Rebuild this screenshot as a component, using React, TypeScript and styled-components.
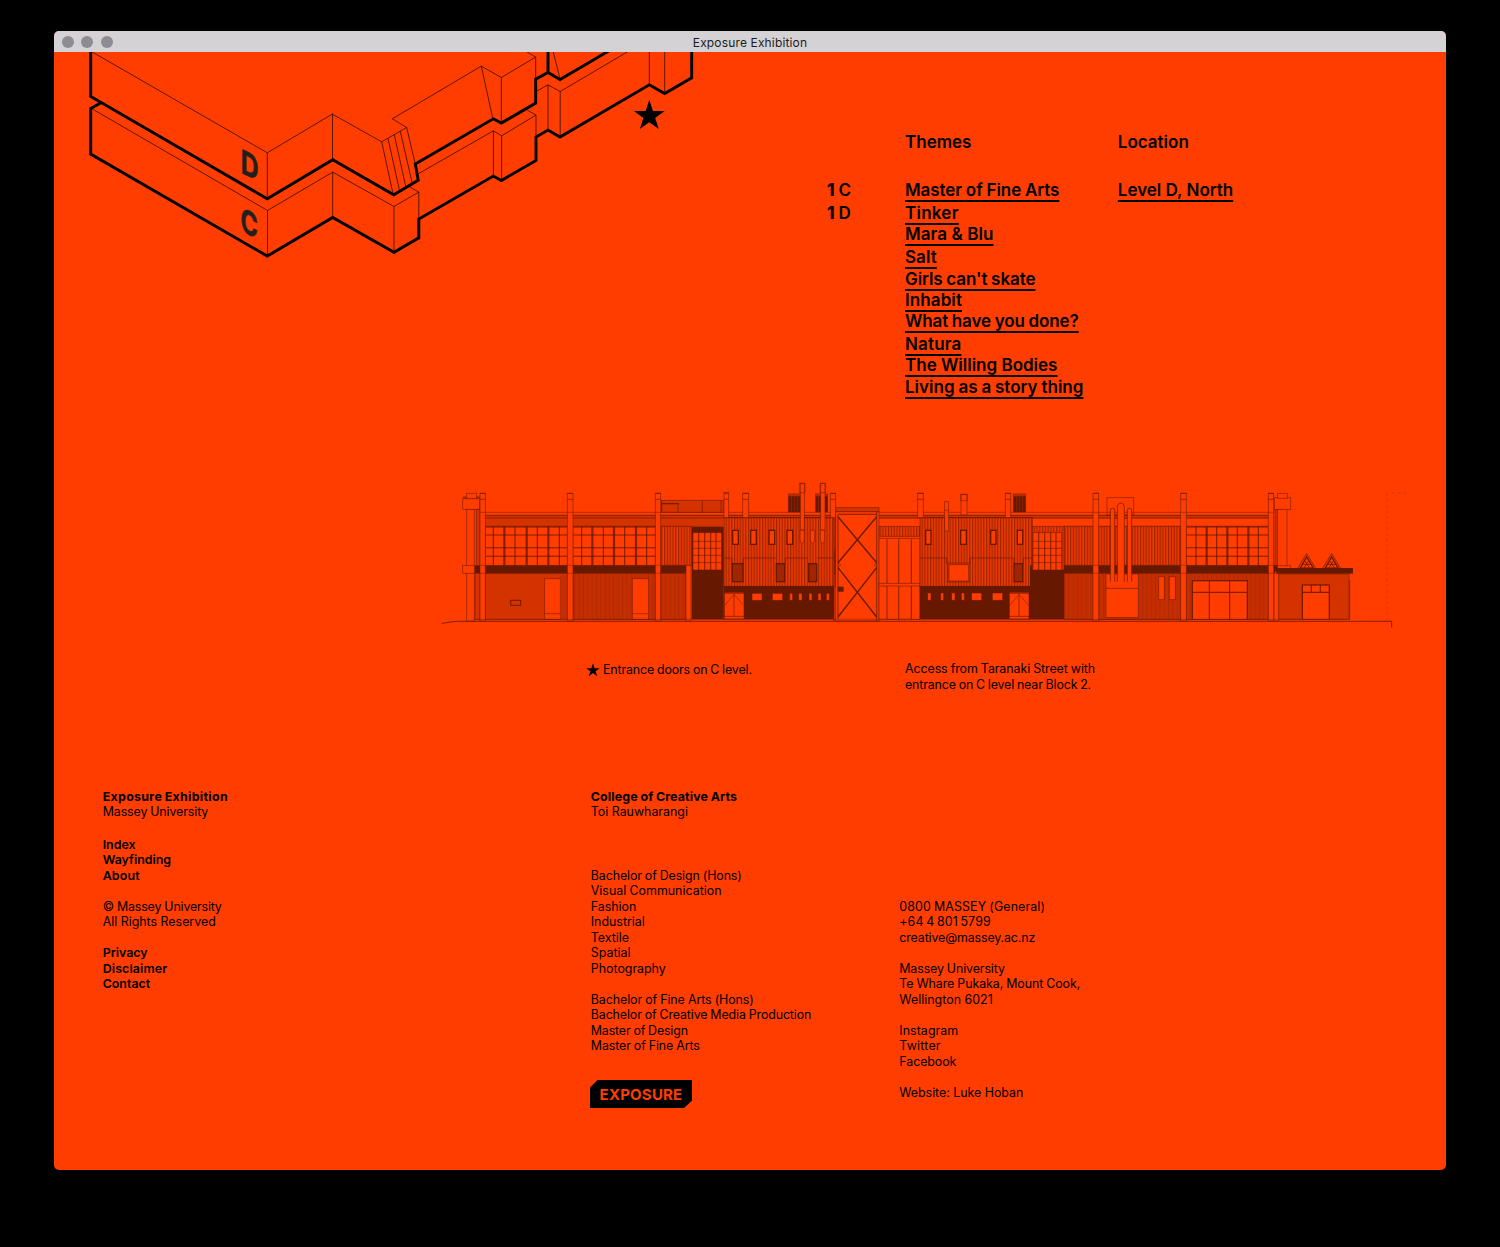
import React from 'react';
import styled, { createGlobalStyle } from 'styled-components';

const ORANGE = '#ff3d00';
const DARK = '#661800';
const MID = '#d43300';
const DEEP = '#c42e00';
const SANS = 'Inter, "Liberation Sans", sans-serif';

const GlobalStyle = createGlobalStyle`
  html, body { margin: 0; background: #000; }
  body { font-family: ${SANS}; color: #000; }
  *, *::before, *::after { box-sizing: border-box; }
`;

const Desktop = styled.div`
  width: 1500px;
  height: 1247px;
  padding: 31px 54px 0;
  background: #000;
  overflow: hidden;
`;

const Window = styled.div`
  width: 1392px;
  height: 1139px;
  border-radius: 5px;
  overflow: hidden;
  background: ${ORANGE};
  display: flex;
  flex-direction: column;
`;

const TitleBar = styled.header`
  flex: none;
  display: grid;
  grid-template-columns: 1fr auto 1fr;
  align-items: center;
  height: 21px;
  padding: 0 8px;
  background: #d4d2d4;
`;

const Lights = styled.div`
  display: flex;
  gap: 7.3px;
`;

const Light = styled.span`
  width: 12px;
  height: 12px;
  border-radius: 50%;
  background: #8e8c93;
`;

const WindowTitle = styled.span`
  padding-top: 1.5px;
  font-size: 12px;
  letter-spacing: 0.15px;
  line-height: 19px;
  color: #1c1c1c;
`;

const Page = styled.main`
  flex: 1;
`;

const Hero = styled.section`
  display: flex;
  height: 423px;

  > svg { flex: none; display: block; }
`;

const Listing = styled.div`
  display: grid;
  grid-template-columns: 78px 212.8px auto;
  grid-template-rows: 21.4px auto;
  row-gap: 26.2px;
  align-content: start;
  padding: 80.2px 0 0 73px;
  font-size: 17px;
  font-weight: 600;
  line-height: 21.4px;
  white-space: nowrap;
`;

const Heading = styled.h2<{ $column: number }>`
  grid-column: ${(p) => p.$column};
  margin: 0;
  font: inherit;
`;

const List = styled.ul<{ $column: number }>`
  grid-column: ${(p) => p.$column};
  grid-row: 2;
  list-style: none;
  margin: 0;
  padding: 0;
`;

const Item = styled.li<{ $step: number }>`
  height: ${(p) => p.$step}px;
`;

const ThemeLink = styled.a<{ $track?: number; $word?: number }>`
  letter-spacing: ${(p) => p.$track ?? 0}px;
  word-spacing: ${(p) => p.$word ?? 0}px;
  text-decoration: underline;
  text-decoration-thickness: 2px;
  text-decoration-skip-ink: none;
  text-underline-offset: 4px;
`;

const Block = styled.b`
  display: inline-block;
  width: 11.5px;
  font-weight: 800;
`;

const Elevation = styled.figure`
  margin: 0;
  padding-left: 386px;
  height: 186px;

  > svg { display: block; }
`;

const Captions = styled.section`
  display: grid;
  grid-template-columns: 319px auto;
  padding-left: 532px;
  height: 127.5px;
`;

const StarCaption = styled.div`
  display: flex;
  align-items: flex-start;
  gap: 3px;
  padding-top: 1px;

  > svg { margin-top: 0.6px; }
`;

const Copy = styled.p<{ $gap?: number }>`
  margin: 0;
  padding-top: ${(p) => p.$gap ?? 0}px;
`;

const Line = styled.span<{ $track?: number; $word?: number; $weight?: number }>`
  display: block;
  height: 15.5px;
  font-size: 12.4px;
  line-height: 15.5px;
  white-space: nowrap;
  font-weight: ${(p) => p.$weight ?? 400};
  letter-spacing: ${(p) => p.$track ?? 0}px;
  word-spacing: ${(p) => p.$word ?? 0}px;
`;

const Footer = styled.footer`
  display: grid;
  grid-template-columns: 488.1px 308.5px auto;
  padding-left: 48.7px;
`;

const Badge = styled.div`
  display: flex;
  align-items: center;
  justify-content: center;
  width: 102.5px;
  height: 28.5px;
  margin: 26px 0 0 -1px;
  background: #000;
  color: ${ORANGE};
  font-size: 15px;
  font-weight: 700;
  letter-spacing: 0.2px;
  clip-path: polygon(8px 0, 100% 0, 100% 20.5px, calc(100% - 8.5px) 100%, 0 100%, 0 8px);
`;

type Entry = { t: string; track?: number; word?: number; weight?: number };

const Lines = ({ items, gap }: { items: Entry[]; gap?: number }) => (
  <Copy $gap={gap}>
    {items.map((e) => (
      <Line key={e.t} $track={e.track} $word={e.word} $weight={e.weight}>
        {e.t}
      </Line>
    ))}
  </Copy>
);

const starPoints = (cx: number, cy: number, r: number) =>
  Array.from({ length: 10 }, (_, i) => {
    const a = -Math.PI / 2 + (i * Math.PI) / 5;
    const q = i % 2 ? r * 0.382 : r;
    return `${(cx + q * Math.cos(a)).toFixed(2)},${(cy + q * Math.sin(a)).toFixed(2)}`;
  }).join(' ');

const BuildingPlan = () => (
  <svg width="700" height="220" viewBox="54 52.2 700 220" fill="none" stroke="#000">
    <g strokeWidth="0.8" strokeOpacity="0.8">
      <path d="M91 51.5 267.3 153 332.3 114.3 381.7 142 406.7 127.7 392.3 119 481.3 66.3 501.3 77.7 535.7 57.3 526 51.5" />
      <path d="M267.3 153V198M332.5 114.3V160M501.3 77.7V122.5M535.7 57.3V80M481.3 66.3 492.7 118.3" />
      <path d="M381.7 142 392.9 193.5M388 138.7 399.3 189.8M394.3 135 405.6 186.2M400.3 131.5 412 182.5M406.7 127.7 415.3 164.3" />
      <path d="M553.2 52 560 79" />
      <path d="M92 109 267.5 210.7 332.7 172.3 394 206.7 418.8 192.3 409.5 187" />
      <path d="M267.5 210.7V256M332.7 172.3V217M394 206.7V252M418.8 192.3V220" />
      <path d="M418.3 174 493.4 131 501.6 136 536 115.3 527.3 110.3M493.4 131V176M501.6 136V180M536 115.3V138" />
      <path d="M536.7 91.3 548 85 560.2 91.7 627.5 52M548 85V130M560.2 91.7V137M649.3 52V85M664.7 52V93" />
    </g>
    <g strokeWidth="2.9">
      <path d="M90.7 51V96.7L267.3 199 332.7 160 393.7 195 418.2 180.5 415.3 164.3 493.3 119 501.3 123.3 535.7 103.3V79.3L548 72.7 560 79.7 609 51" />
      <path d="M548 51V72.7" />
      <path d="M101 103 90.7 108.7V154.3L267.3 256.3 332.7 217.7 394 252.5 418.8 238V219.3L493.3 176.3 501.3 180.7 536 160.7V137.3L548 130.3 560 137.3 649.3 85 664.7 93.7 691.7 78V51" />
    </g>
    <g fill="#231f20" stroke="#231f20" strokeWidth="0.6" fontFamily={SANS} fontWeight="700" fontSize="33">
      <text transform="matrix(.75 .36 0 1 240.8 173)">D</text>
      <text transform="matrix(.71 .34 0 1 240.6 231)">C</text>
    </g>
    <polygon points={starPoints(649.3, 116.2, 16.2)} fill="#000" stroke="none" />
  </svg>
);

type Rect = [number, number, number, number];

const Rects = ({ list, fill = ORANGE, outline = true, heavy = false }: { list: Rect[]; fill?: string; outline?: boolean; heavy?: boolean }) => (
  <g fill={fill} stroke={outline ? DARK : 'none'} strokeOpacity={heavy ? 1 : 0.6} strokeWidth={heavy ? 4 : 2.6}>
    {list.map(([x1, y1, x2, y2], i) => (
      <rect key={i} x={x1} y={y1} width={x2 - x1} height={y2 - y1} />
    ))}
  </g>
);

const Rules = ({ d, width = 2.4, opacity = 0.6 }: { d: string; width?: number; opacity?: number }) => (
  <path d={d} fill="none" stroke={DARK} strokeWidth={width} strokeOpacity={opacity} />
);

/* A glazed bay: outer frame, four transoms, alternating slim and thick mullions. */
const GlazedBay = ({ x1, x2, slim, thick }: { x1: number; x2: number; slim: number[]; thick: number[] }) => (
  <g>
    <Rects list={[[x1, 154, x2, 271]]} />
    <Rules d={[156, 180, 218, 244].map((y) => `M${x1} ${y}H${x2}`).join('')} width={3.2} opacity={0.85} />
    <Rules d={slim.map((x) => `M${x} 154V271`).join('')} width={3.2} opacity={0.85} />
    <Rules d={thick.map((x) => `M${x} 154V271`).join('')} width={6.5} opacity={0.8} />
  </g>
);

const GridWindow = ({ x }: { x: number }) => (
  <g>
    <Rects list={[[x, 173, x + 86, 285]]} />
    <Rules d={[17, 35, 53, 69].map((o) => `M${x + o} 173V285`).join('')} width={3.2} opacity={0.8} />
    <Rules d={[199, 220, 241, 263].map((y) => `M${x} ${y}H${x + 86}`).join('')} width={2.4} opacity={0.7} />
  </g>
);

const EntryDoor = ({ x }: { x: number }) => (
  <g>
    <Rects list={[[x, 352, x + 59, 432]]} />
    <Rules d={`M${x} 355H${x + 59}M${x + 29} 358V425M${x} 424H${x + 59}`} width={3} />
    <Rules d={`M${x + 2} 390 ${x + 29} 358 ${x + 57} 390`} width={2.4} />
  </g>
);

const Gable = ({ x }: { x: number }) => (
  <g>
    <path d={`M${x - 27} 279 ${x} 235 ${x + 27} 279`} fill={MID} stroke={DARK} strokeOpacity=".6" strokeWidth="2.4" />
    <path d={`M${x - 19} 279 ${x} 246 ${x + 19} 279Z`} fill={ORANGE} stroke={DARK} strokeWidth="3.5" />
    <Rules d={`M${x - 5} 258 ${x + 8} 279M${x + 5} 258 ${x - 8} 279M${x - 12} 268H${x + 12}`} width={2.6} opacity={0.9} />
  </g>
);

const columns: Rect[] = [
  [120, 55, 136, 438], [382, 55, 399, 438], [646, 55, 662, 438],
  [1959, 55, 1976, 438], [2222, 55, 2239, 438], [2485, 55, 2501, 438],
];
const stubs: Rect[] = [
  [852, 52, 866, 128], [908, 55, 926, 128], [1171, 55, 1187, 128], [1433, 55, 1450, 128], [1696, 55, 1712, 128],
];

const NorthElevation = () => (
  <svg width="980" height="160" viewBox="0 0 2940 480">
    <defs>
      <pattern id="sheet" width="8.4" height="10" patternUnits="userSpaceOnUse">
        <rect width="8.4" height="10" fill="#ef3900" />
        <rect width="3.6" height="10" fill="#a02500" />
      </pattern>
      <pattern id="cladding" width="13" height="10" patternUnits="userSpaceOnUse">
        <rect width="13" height="10" fill={DEEP} />
        <rect width="3" height="10" fill="#b32a00" />
      </pattern>
      <pattern id="louvre" width="9" height="10" patternUnits="userSpaceOnUse">
        <rect width="9" height="10" fill={DARK} />
        <rect width="3" height="10" fill="#852000" />
      </pattern>
    </defs>

    {/* roof plant */}
    <Rects list={[[665, 76, 850, 112]]} fill={MID} />
    <Rules d="M714 85V112M787 76V112M843 76V112M665 112V76" width={3} />
    <Rules d="M665 86H716" width={4} opacity={0.8} />
    <Rects list={[[1045, 57, 1082, 111], [1127, 57, 1163, 111], [1720, 57, 1757, 111]]} fill="url(#louvre)" />
    <path d="M1045 60H1082M1127 60H1163M1720 60H1757" stroke="#b32a00" strokeWidth="8" />
    <Rects list={[[2001, 68, 2081, 120]]} />

    {/* parapet */}
    <Rects list={[[136, 131, 850, 155]]} fill={MID} outline={false} />
    <Rules d="M136 112H2485M136 154H850M1872 154H2485" width={2.6} opacity={0.55} />
    <Rules d="M136 121H2485" width={3} opacity={0.85} />
    <Rules d="M136 128H2485" width={7} opacity={0.55} />

    {/* west and east glazing */}
    <GlazedBay x1={136} x2={382} slim={[160, 225, 292, 358]} thick={[193, 260, 325]} />
    <GlazedBay x1={399} x2={646} slim={[425, 490, 554, 620]} thick={[457, 522, 588]} />
    <GlazedBay x1={2239} x2={2485} slim={[2268, 2330, 2392, 2455]} thick={[2300, 2362, 2425]} />
    <Rects list={[[662, 154, 755, 271], [1872, 154, 2222, 271]]} fill="url(#sheet)" />

    {/* lower walls */}
    <Rects list={[[136, 295, 382, 434]]} fill={MID} />
    <Rects list={[[399, 295, 646, 434], [662, 295, 738, 434], [1872, 295, 2222, 434], [2239, 295, 2485, 434]]} fill="url(#cladding)" />
    <Rects list={[[314, 311, 361, 433], [577, 311, 626, 433]]} />
    <Rects list={[[361, 300, 382, 434]]} fill={DEEP} outline={false} />
    <Rules d="M314 416H361M577 416H626" />
    <Rects list={[[212, 376, 242, 391]]} fill={MID} />
    <Rules d="M212 376H242V391H212Z" width={3} />
    <Rects list={[[105, 271, 738, 295], [1872, 271, 2505, 295]]} fill={DARK} outline={false} />

    {/* west end */}
    <Rects list={[[80, 103, 103, 438], [68, 71, 119, 103], [80, 55, 110, 71], [68, 271, 103, 295]]} />
    <Rects list={[[105, 295, 120, 434], [109, 103, 120, 271]]} fill={MID} />
    <Rules d="M69 67H80M110 67H119" width={5} />

    {/* centre-left block */}
    <Rects list={[[852, 128, 1187, 334]]} fill="url(#sheet)" />
    <Rules d="M852 249H876V266M910 266V249H1008M1036 266V249H1105M1132 249H1187M852 128H1171" width={3} />
    <Rects list={[[755, 156, 851, 433], [851, 333, 1182, 433]]} fill={DARK} outline={false} />
    <Rules d="M755 313H851M755 382H851M755 410H851M851 340H1182" width={2} opacity={1} />
    <GridWindow x={759} />
    <Rects list={[[738, 271, 753, 438]]} />
    <Rects list={[[878, 166, 895, 208], [932, 166, 949, 208], [987, 166, 1004, 208], [1041, 166, 1058, 208]]} heavy />
    <Rects list={[[877, 266, 909, 320], [1009, 266, 1034, 320], [1106, 266, 1130, 320]]} fill="#a02500" heavy />
    <EntryDoor x={853} />
    <Rects list={[[936, 355, 966, 376], [997, 355, 1028, 376], [1049, 355, 1058, 376], [1076, 355, 1086, 376], [1107, 355, 1116, 376], [1134, 355, 1143, 376], [1159, 355, 1168, 376]]} />

    {/* glazed stair tower with cross bracing */}
    <Rects list={[[1187, 110, 1317, 438]]} />
    <Rects list={[[1188, 98, 1317, 110]]} fill={MID} />
    <Rules d="M1194 118V433M1310 110V438M1182 128V438M1194 118H1310M1184 222V300" width={3.4} opacity={0.7} />
    <Rules d="M1194 125 1310 263M1310 125 1194 263M1194 278 1310 426M1310 278 1194 426" width={4.4} opacity={0.95} />
    <Rules d="M1194 264 1202 270 1194 278M1310 264 1302 270 1310 278" width={2.4} />
    <Rects list={[[1193, 335, 1211, 350]]} fill={DARK} outline={false} />

    {/* link bay */}
    <Rects list={[[1317, 190, 1440, 433]]} />
    <Rects list={[[1317, 154, 1440, 184]]} fill="url(#sheet)" />
    <Rules d="M1341 193V433M1376 193V433M1414 193V433" width={3.4} opacity={0.7} />
    <Rects list={[[1317, 325, 1440, 333]]} />

    {/* centre-right block */}
    <Rects list={[[1440, 128, 1777, 334]]} fill="url(#sheet)" />
    <Rules d="M1440 249H1520V266M1590 266V249H1722V266M1750 266V249H1777M1440 128H1777" width={3} />
    <Rects list={[[1777, 154, 1872, 285]]} fill="url(#sheet)" />
    <Rects list={[[1439, 333, 1770, 433], [1770, 271, 1777, 333], [1770, 285, 1872, 433]]} fill={DARK} outline={false} />
    <Rules d="M1439 340H1770M1777 382H1872M1777 410H1872" width={2} opacity={1} />
    <GridWindow x={1779} />
    <Rects list={[[1457, 166, 1473, 208], [1562, 166, 1579, 208], [1652, 166, 1668, 208], [1732, 166, 1748, 208]]} heavy />
    <Rects list={[[1523, 264, 1590, 321]]} fill="#d03200" />
    <Rects list={[[1527, 269, 1586, 318]]} />
    <Rects list={[[1722, 266, 1748, 320]]} fill="#a02500" heavy />
    <EntryDoor x={1708} />
    <Rects list={[[1463, 354, 1473, 376], [1502, 354, 1511, 376], [1535, 354, 1545, 376], [1564, 354, 1573, 376], [1595, 354, 1625, 376], [1657, 354, 1688, 376]]} />

    {/* chimney stack bay */}
    <Rects list={[[1998, 297, 2095, 428]]} />
    <Rules d="M1998 340H2095" width={3} />
    <g fill={ORANGE} stroke={DARK} strokeOpacity=".7" strokeWidth="2.8">
      <path d="M2011 320V106a6.5 6.5 0 0 1 13 0V320" />
      <path d="M2032 320V95a10.5 10.5 0 0 1 21 0V320" />
      <path d="M2062 320V106a6.5 6.5 0 0 1 13 0V320" />
    </g>
    <Rects list={[[2156, 305, 2173, 374], [2188, 305, 2206, 374]]} />

    {/* east wall openings */}
    <Rects list={[[2257, 317, 2422, 433]]} />
    <Rules d="M2257 317H2422V433M2257 317V433M2257 352H2422M2308 317V433M2369 317V433" width={3.4} opacity={0.8} />

    {/* annexe */}
    <Rects list={[[2505, 103, 2512, 275]]} fill={MID} />
    <Rects list={[[2512, 103, 2541, 272], [2503, 68, 2552, 103], [2513, 55, 2542, 70]]} />
    <Rules d="M2541 272H2552V279" />
    <Rects list={[[2516, 297, 2727, 433]]} fill={MID} />
    <Rects list={[[2502, 295, 2516, 438]]} />
    <Rules d="M2729 315V433" width={3} />
    <Rects list={[[2587, 330, 2668, 433]]} />
    <Rules d="M2587 433V330H2668V433M2587 352H2668M2614 330V352M2641 330V352" width={3.4} opacity={0.85} />
    <Gable x={2600} />
    <Gable x={2675} />
    <Rects list={[[2501, 271, 2513, 290], [2509, 279, 2739, 296]]} fill={DARK} outline={false} />

    {/* columns and flues */}
    <Rects list={columns} />
    <Rects list={stubs} />
    <Rules d={[...columns, ...stubs].map(([x1, , x2]) => `M${x1} 73H${x2}M${x1} 55H${x2}`).join('')} width={3} />
    <Rules d={columns.map(([x1, , x2]) => `M${x1} 271H${x2}M${x1} 295H${x2}M${x1} 112H${x2}`).join('')} width={2.4} opacity={0.5} />
    <Rects list={[[1081, 25, 1093, 165], [1142, 25, 1155, 165], [1514, 80, 1526, 168], [1563, 58, 1581, 120]]} />
    <Rules d="M1078 25H1095V53H1078ZM1140 25H1157V53H1140ZM1513 106H1527M1562 77H1582V58H1562Z" />
    <g fill={ORANGE} stroke={DARK} strokeOpacity=".6" strokeWidth="2.6">
      {[1080, 1111, 1141].map((x) => (
        <path key={x} d={`M${x} 166h13v27q0 10-6.5 13q-6.5-3-6.5-13Z`} />
      ))}
    </g>

    {/* ground */}
    <Rules d="M5 445 48 439H2855V457" width={3} opacity={0.8} />
    <Rules d="M105 433H2730" width={2.4} opacity={0.5} />
    <path d="M2841 438V54M2856 54H2900" fill="none" stroke={DARK} strokeOpacity=".25" strokeWidth="2.4" strokeDasharray="9 8" />
  </svg>
);

const themes: (Entry & { step: number })[] = [
  { t: 'Master of Fine Arts', word: -0.4, track: -0.065, step: 23 },
  { t: 'Tinker', track: 0.25, step: 21.6 },
  { t: 'Mara & Blu', track: 0.08, step: 22.7 },
  { t: 'Salt', track: 0.05, step: 21.6 },
  { t: "Girls can't skate", word: -0.5, track: -0.08, step: 21.1 },
  { t: 'Inhabit', track: 0.09, step: 21.4 },
  { t: 'What have you done?', word: -0.5, track: -0.1, step: 23 },
  { t: 'Natura', track: 0.18, step: 21.2 },
  { t: 'The Willing Bodies', step: 21.4 },
  { t: 'Living as a story thing', word: -0.4, step: 21.4 },
];

const degrees: Entry[] = [
  { t: 'Bachelor of Design (Hons)', word: -0.4, track: -0.09 },
  { t: 'Visual Communication', word: -0.3, track: 0.02 },
  { t: 'Fashion' },
  { t: 'Industrial' },
  { t: 'Textile' },
  { t: 'Spatial' },
  { t: 'Photography' },
];

const otherDegrees: Entry[] = [
  { t: 'Bachelor of Fine Arts (Hons)', word: -0.3, track: -0.065 },
  { t: 'Bachelor of Creative Media Production', word: -0.4, track: -0.11 },
  { t: 'Master of Design', word: -0.4, track: -0.14 },
  { t: 'Master of Fine Arts', word: -0.4, track: -0.08 },
];

export default function App() {
  return (
    <Desktop>
      <GlobalStyle />
      <Window>
        <TitleBar>
          <Lights>
            <Light />
            <Light />
            <Light />
          </Lights>
          <WindowTitle>Exposure Exhibition</WindowTitle>
        </TitleBar>
        <Page>
          <Hero>
            <BuildingPlan />
            <Listing>
              <Heading $column={2}>Themes</Heading>
              <Heading $column={3}>Location</Heading>
              <List $column={1}>
                <Item $step={23}><Block>1</Block>C</Item>
                <Item $step={21.6}><Block>1</Block>D</Item>
              </List>
              <List $column={2}>
                {themes.map((e) => (
                  <Item key={e.t} $step={e.step}>
                    <ThemeLink $track={e.track} $word={e.word}>{e.t}</ThemeLink>
                  </Item>
                ))}
              </List>
              <List $column={3}>
                <Item $step={23}><ThemeLink>Level D, North</ThemeLink></Item>
              </List>
            </Listing>
          </Hero>
          <Elevation>
            <NorthElevation />
          </Elevation>
          <Captions>
            <StarCaption>
              <svg width="14" height="14" viewBox="0 0 14 14">
                <polygon points={starPoints(7, 7.4, 7.1)} />
              </svg>
              <Line $word={-0.5} $track={-0.12}>Entrance doors on C level.</Line>
            </StarCaption>
            <Lines
              items={[
                { t: 'Access from Taranaki Street with', word: -0.3, track: -0.07 },
                { t: 'entrance on C level near Block 2.', word: -0.5, track: -0.13 },
              ]}
            />
          </Captions>
          <Footer>
            <div>
              <Lines
                items={[
                  { t: 'Exposure Exhibition', weight: 700, track: 0.31, word: -0.6 },
                  { t: 'Massey University', word: -0.4, track: -0.1 },
                ]}
              />
              <Lines
                gap={17.3}
                items={[
                  { t: 'Index', weight: 600 },
                  { t: 'Wayfinding', weight: 600 },
                  { t: 'About', weight: 600, track: 0.15 },
                ]}
              />
              <Lines
                gap={15.5}
                items={[
                  { t: '© Massey University', word: -0.2, track: -0.16 },
                  { t: 'All Rights Reserved' },
                ]}
              />
              <Lines
                gap={15.5}
                items={[
                  { t: 'Privacy', weight: 600 },
                  { t: 'Disclaimer', weight: 600, track: 0.13 },
                  { t: 'Contact', weight: 600 },
                ]}
              />
            </div>
            <div>
              <Lines
                items={[
                  { t: 'College of Creative Arts', weight: 700, track: 0.13, word: -0.4 },
                  { t: 'Toi Rauwharangi' },
                ]}
              />
              <Lines gap={48.3} items={degrees} />
              <Lines gap={15.5} items={otherDegrees} />
              <Badge>EXPOSURE</Badge>
            </div>
            <div>
              <Lines
                gap={110.3}
                items={[
                  { t: '0800 MASSEY (General)', track: 0.12, word: -0.5 },
                  { t: '+64 4 801 5799', word: -1, track: 0.13 },
                  { t: 'creative@massey.ac.nz', track: -0.12 },
                ]}
              />
              <Lines
                gap={15.5}
                items={[
                  { t: 'Massey University', word: -0.4, track: -0.1 },
                  { t: 'Te Whare Pukaka, Mount Cook,', word: -0.3, track: -0.08 },
                  { t: 'Wellington 6021', track: 0.03 },
                ]}
              />
              <Lines
                gap={15.5}
                items={[{ t: 'Instagram', track: 0.07 }, { t: 'Twitter', track: 0.22 }, { t: 'Facebook', track: -0.06 }]}
              />
              <Lines gap={15.5} items={[{ t: 'Website: Luke Hoban', track: -0.02 }]} />
            </div>
          </Footer>
        </Page>
      </Window>
    </Desktop>
  );
}
